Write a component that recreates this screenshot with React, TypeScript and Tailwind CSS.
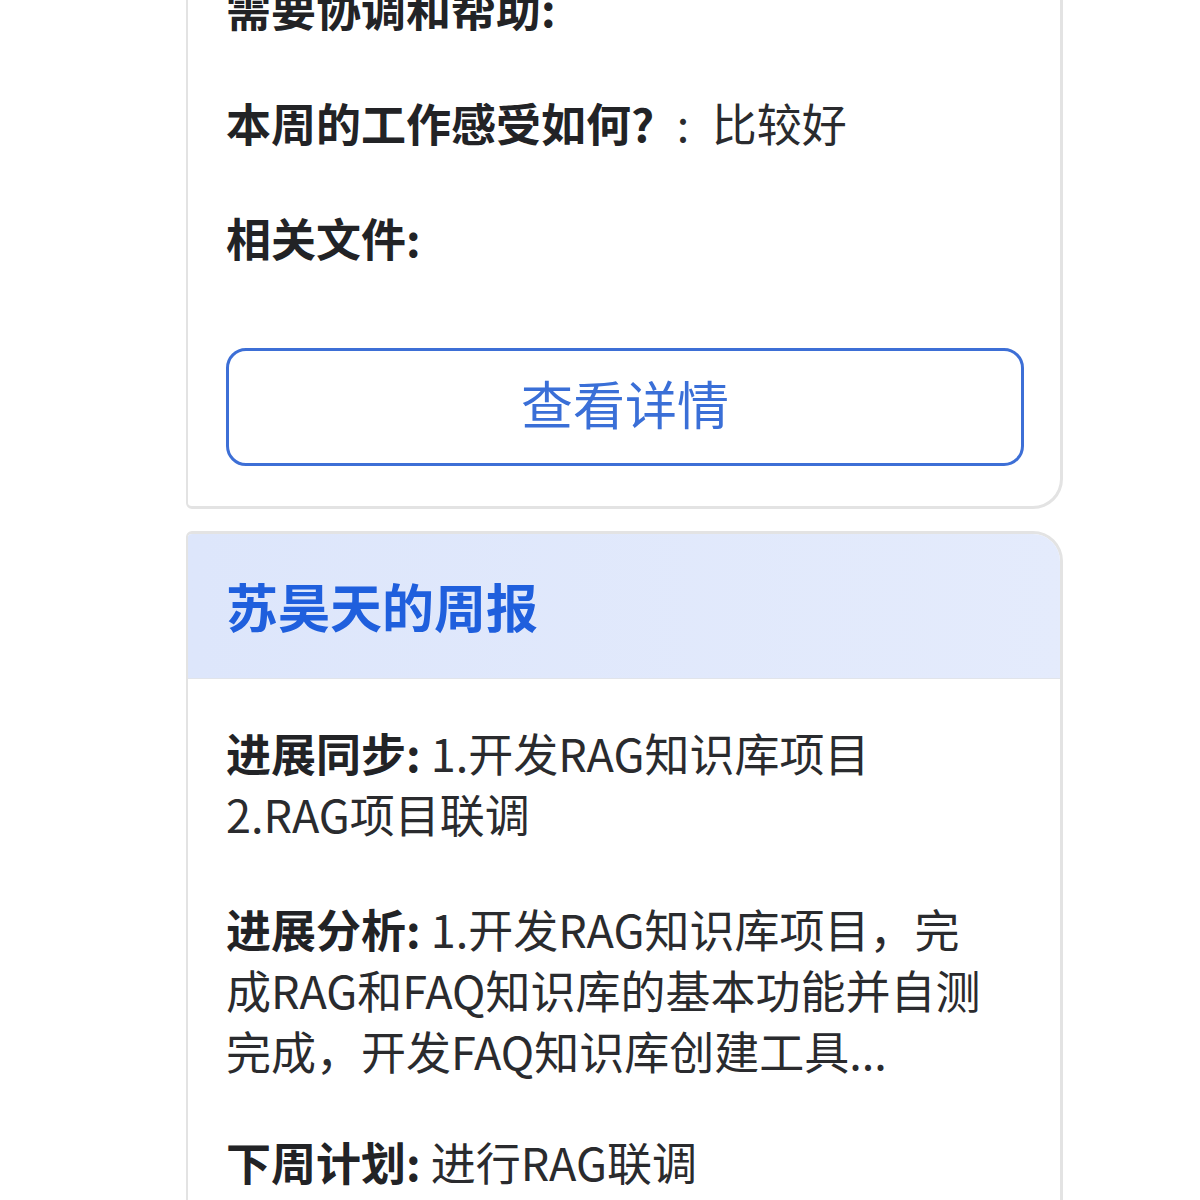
import React from "react";

const font = { fontFamily: '"Noto Sans CJK SC", "Noto Sans", sans-serif' };

function Field({ label, children }: { label: string; children?: React.ReactNode }) {
  return (
    <p className="text-[45px] leading-[61px] mb-[54px] text-[#2a2b2e]">
      <span className="font-bold text-[#222326]">{label}</span>
      {children}
    </p>
  );
}

export default function App() {
  return (
    <div className="w-[1200px] h-[1200px] overflow-hidden bg-white" style={font}>
      <div className="ml-[186px] w-[877px] -mt-[125px]">
        {/* first card (top cut off) */}
        <div className="border-2 border-r-[3px] border-b-[3px] border-[#e3e3e3] rounded-l-[6px] rounded-r-[30px] bg-white pt-[100px] px-[38px] pb-[40px]">
          <Field label="需要协调和帮助:" />
          <Field label="本周的工作感受如何?">{"\u2002:\u2002比较好"}</Field>
          <Field label="相关文件:" />
          <button className="mt-[80px] w-[798px] h-[118px] rounded-[20px] border-[3px] border-[#3d6fd6] text-[#3a6fd7] text-[52px] leading-none pb-[8px] flex items-center justify-center">
            查看详情
          </button>
        </div>

        {/* second card (bottom cut off) */}
        <div className="mt-[22px] border-2 border-r-[3px] border-t-[3px] border-[#e3e3e3] rounded-tl-[6px] rounded-tr-[30px] bg-white overflow-hidden">
          <div className="h-[145px] bg-gradient-to-r from-[#dde6fb] to-[#e4ebfc] border-b border-[#e1e4ea] px-[38px] flex items-center">
            <h2 className="text-[52px] font-bold text-[#1f5fdd] leading-none">苏昊天的周报</h2>
          </div>
          <div className="px-[38px] pt-[43px] pb-[80px]">
            <Field label="进展同步:">
              {" 1.开发RAG知识库项目"}
              <br />
              2.RAG项目联调
            </Field>
            <Field label="进展分析:">
              {" 1.开发RAG知识库项目，完"}
              <br />
              成RAG和FAQ知识库的基本功能并自测
              <br />
              完成，开发FAQ知识库创建工具...
            </Field>
            <p className="text-[45px] leading-[61px] -mt-[4px] text-[#2a2b2e]">
              <span className="font-bold text-[#222326]">下周计划:</span>
              {" 进行RAG联调"}
            </p>
          </div>
        </div>
      </div>
    </div>
  );
}
